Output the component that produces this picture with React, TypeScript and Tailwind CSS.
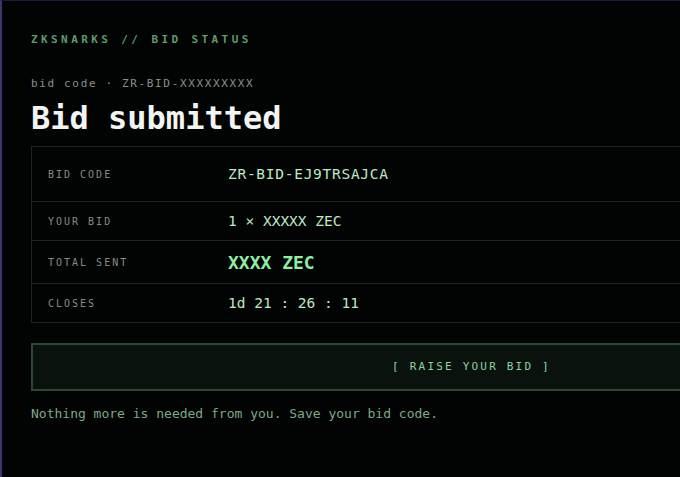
import React from "react";

const mono = { fontFamily: '"DejaVu Sans Mono", "Liberation Mono", monospace' };

function Row({ label, children, h }: { label: string; children: React.ReactNode; h: string }) {
  return (
    <div className={`flex items-center border-b border-[#1c261f] last:border-b-0 ${h}`}>
      <div className="w-[196px] pl-[16px] text-[10px] tracking-[0.2em] text-[#838c86]">{label}</div>
      <div className="flex-1">{children}</div>
    </div>
  );
}

export default function App() {
  return (
    <div
      className="w-[680px] h-[477px] overflow-hidden bg-[#020403] border-l-2 border-l-[#3d3470] border-t border-t-[#1e1a3a]"
      style={mono}
    >
      <div className="w-[881px] ml-[29px] pt-[32px]">
        <div className="text-[11px] font-bold tracking-[0.31em] text-[#5d9c6b] leading-[14px]">
          ZKSNARKS // BID STATUS
        </div>
        <div className="mt-[30px] text-[11px] tracking-[0.15em] text-[#8a918c] leading-[14px]">
          bid code · ZR-BID-XXXXXXXXX
        </div>
        <div className="mt-[7px] text-[32px] font-bold text-[#f2f4f2] leading-[40px]">
          Bid submitted
        </div>
        <div className="mt-[8px] border border-[#1c261f]">
          <Row label="BID CODE" h="h-[55px]">
            <span className="text-[14.5px] tracking-[0.05em] text-[#bfe8c6]">ZR-BID-EJ9TRSAJCA</span>
          </Row>
          <Row label="YOUR BID" h="h-[39px]">
            <span className="text-[14.5px] text-[#bfe8c6]">1 × XXXXX ZEC</span>
          </Row>
          <Row label="TOTAL SENT" h="h-[43px]">
            <span className="text-[18px] font-bold text-[#8df0a4]">XXXX ZEC</span>
          </Row>
          <Row label="CLOSES" h="h-[38px]">
            <span className="text-[14.5px] text-[#bfe8c6]">1d 21 : 26 : 11</span>
          </Row>
        </div>
        <button className="mt-[20px] w-full h-[48px] bg-[#0a120d] border-2 border-[#2c4733] text-[11px] tracking-[0.2em] text-[#8fd3a0] flex items-center justify-center">
          [ RAISE YOUR BID ]
        </button>
        <div className="mt-[15px] text-[13px] text-[#7fa888] leading-[16px]">
          Nothing more is needed from you. Save your bid code.
        </div>
      </div>
    </div>
  );
}
